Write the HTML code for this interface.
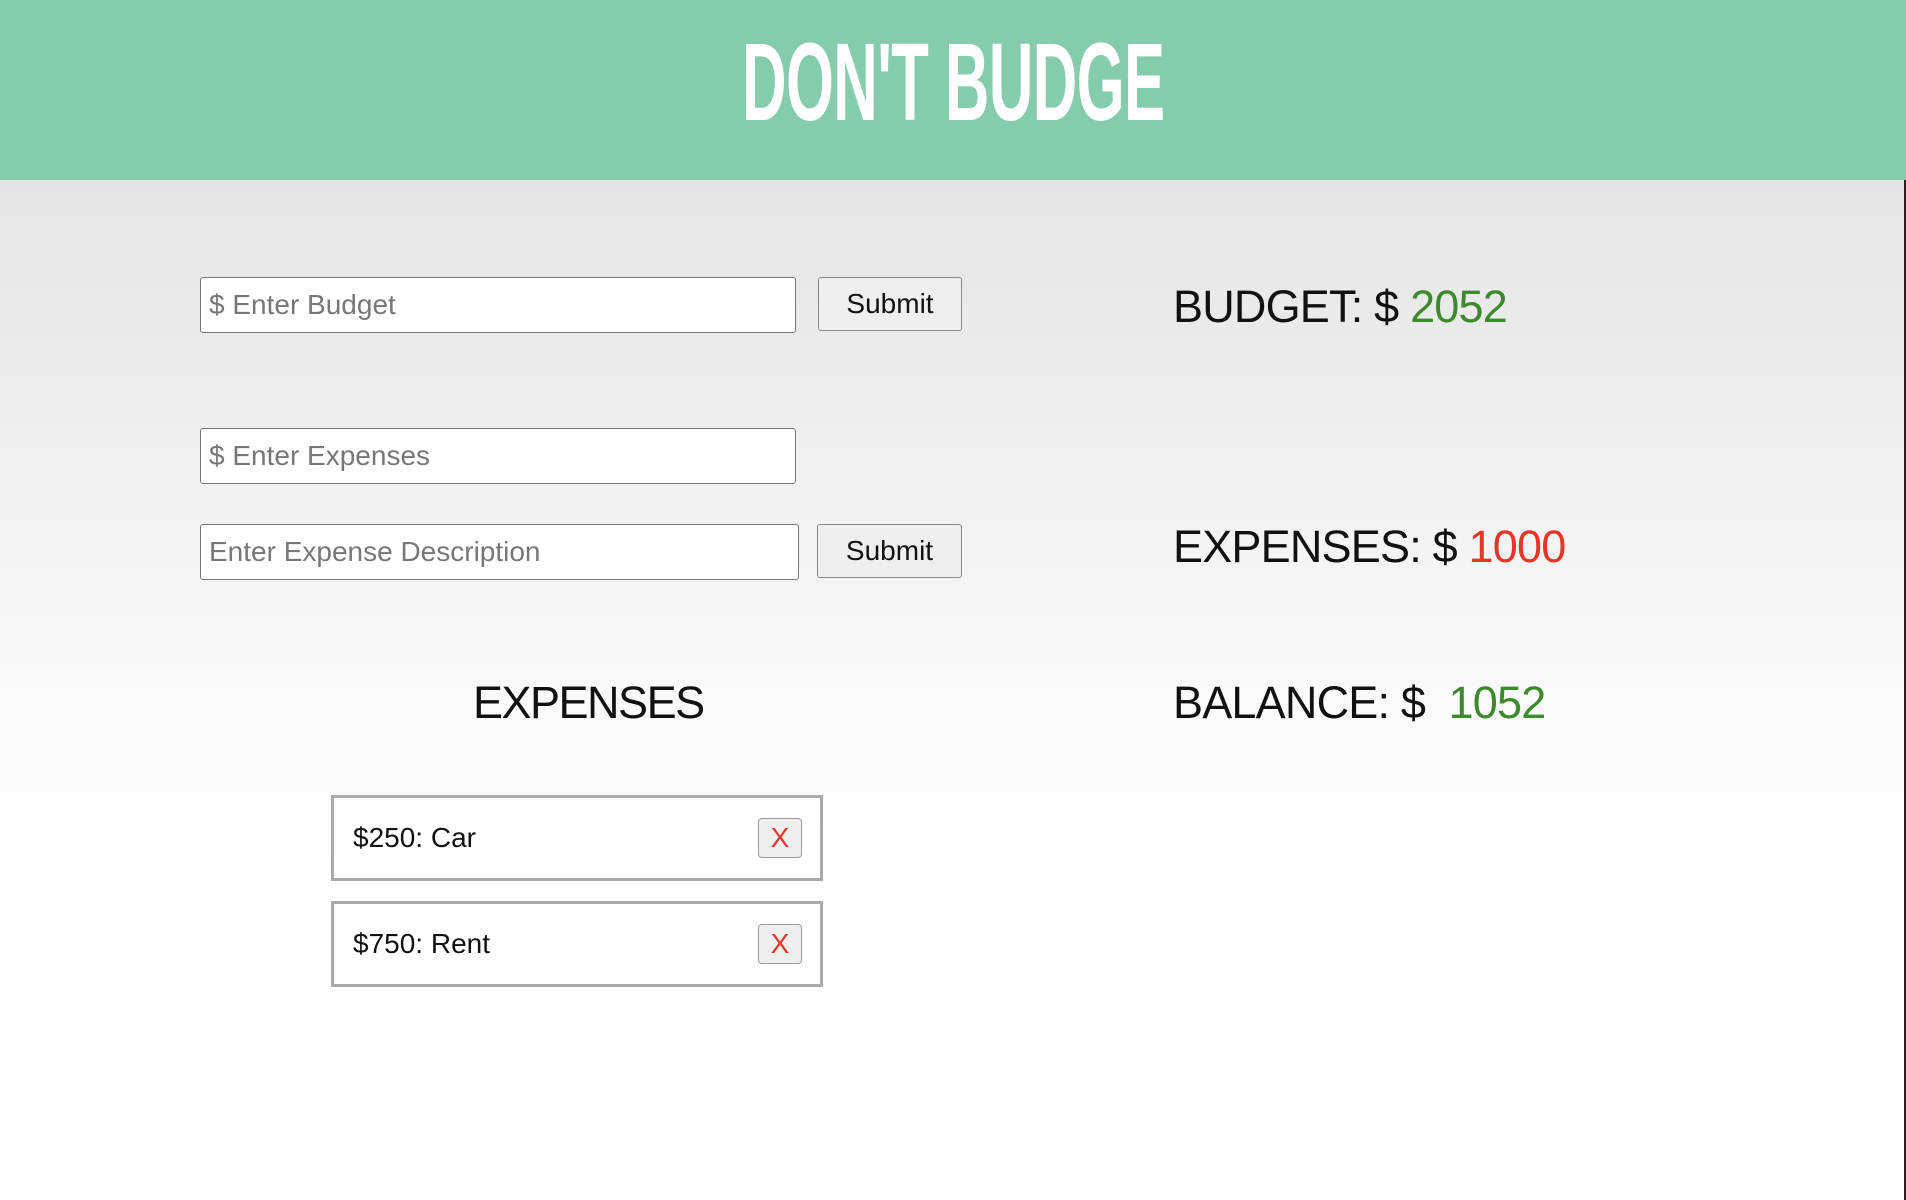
<!DOCTYPE html>
<html><head><meta charset="utf-8"><style>
*{margin:0;padding:0;box-sizing:border-box}
html,body{width:1906px;height:1200px;overflow:hidden}
body{font-family:"Liberation Sans",sans-serif;background:#fff;position:relative}
.hdr{position:absolute;left:0;top:0;width:1906px;height:180px;background:#85ccad}
.title{position:absolute;left:0;top:0;width:1906px;text-align:center;line-height:180px;height:180px}
.title span{display:inline-block;color:#fff;font-weight:bold;font-size:110px;transform:scaleX(0.56);letter-spacing:-1px;line-height:180px;position:relative;top:-7px}
.main{position:absolute;left:0;top:180px;width:1906px;height:1020px;background:linear-gradient(#e4e4e4 0px,#f1f1f1 300px,#fafafa 520px,#fff 700px)}
.inp{position:absolute;background:#fff;border:1px solid #777;border-radius:3px;font-size:28px;color:#777;padding-left:8px;display:flex;align-items:center}
.btn{position:absolute;background:#efefef;border:1px solid #888;border-radius:3px;font-size:28px;color:#111;display:flex;align-items:center;justify-content:center}
.big{position:absolute;font-size:45px;color:#111;white-space:nowrap;letter-spacing:-0.8px}
.g{color:#3d8a2e}.r{color:#e8352a}
.item{position:absolute;left:331px;width:492px;height:86px;border:3px solid #aaa;background:#fff;font-size:28px;color:#111;padding-left:19px;display:flex;align-items:center}
.x{position:absolute;left:424px;top:20px;width:44px;height:40px;background:#efefef;border:1px solid #999;border-radius:4px;color:#e8352a;font-size:28px;display:flex;align-items:center;justify-content:center}
.edge{position:absolute;right:0;top:180px;width:2px;height:1020px;background:#222}
</style></head><body>
<div class="hdr"></div>
<div class="title"><span>DON'T BUDGE</span></div>
<div class="main"></div>
<div class="edge"></div>
<div class="inp" style="left:200px;top:277px;width:596px;height:56px">$ Enter Budget</div>
<div class="btn" style="left:818px;top:277px;width:144px;height:54px">Submit</div>
<div class="big" style="left:1173px;top:281px">BUDGET: $ <span class="g">2052</span></div>
<div class="inp" style="left:200px;top:428px;width:596px;height:56px">$ Enter Expenses</div>
<div class="inp" style="left:200px;top:524px;width:599px;height:56px">Enter Expense Description</div>
<div class="btn" style="left:817px;top:524px;width:145px;height:54px">Submit</div>
<div class="big" style="left:1173px;top:521px">EXPENSES: $ <span class="r">1000</span></div>
<div class="big" style="left:473px;top:677px;letter-spacing:-1.5px">EXPENSES</div>
<div class="big" style="left:1173px;top:677px">BALANCE: $ &nbsp;<span class="g">1052</span></div>
<div class="item" style="top:795px">$250: Car<div class="x">X</div></div>
<div class="item" style="top:901px">$750: Rent<div class="x">X</div></div>
</body></html>
